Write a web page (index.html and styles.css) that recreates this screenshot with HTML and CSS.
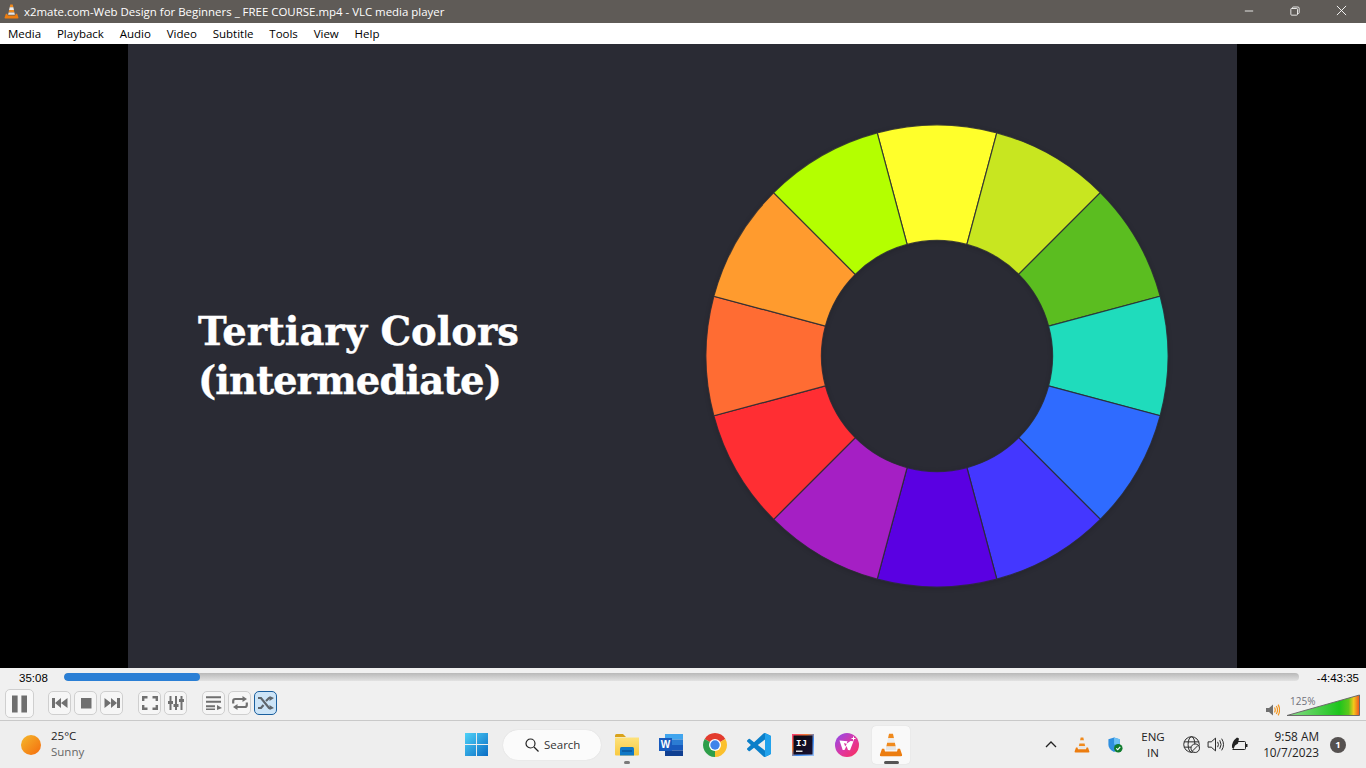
FILE: index.html
```html
<!DOCTYPE html>
<html lang="en">
<head>
<meta charset="utf-8">
<title>VLC media player</title>
<link rel="stylesheet" href="styles.css">
</head>
<body>
<div class="app">
  <header class="titlebar">
    <svg class="vlc-small" viewBox="0 0 16 16"><use href="#cone"/></svg>
    <span class="title-text">x2mate.com-Web Design for Beginners _ FREE COURSE.mp4 - VLC media player</span>
    <div class="winbtns">
      <svg class="wb wb-min" viewBox="0 0 12 12"><path d="M1 6h10" stroke="#fff" stroke-width="1"/></svg>
      <svg class="wb wb-max" viewBox="0 0 12 12"><path d="M3 3V2.200q0-1 1-1h5.500q1.500 0 1.500 1.500V8q0 1-1 1H9M1.500 3H8q1 0 1 1v6q0 1-1 1H2q-1 0-1-1V4q0-1 .5-1z" fill="none" stroke="#fff"/></svg>
      <svg class="wb wb-close" viewBox="0 0 12 12"><path d="M1 1l10 10M11 1L1 11" stroke="#fff"/></svg>
    </div>
  </header>
  <nav class="menubar">
    <span>Media</span><span>Playback</span><span>Audio</span><span>Video</span><span>Subtitle</span><span>Tools</span><span>View</span><span>Help</span>
  </nav>
  <main class="video">
    <section class="frame">
      <h1 class="slide-title">Tertiary Colors<br><span class="line2">(intermediate)</span></h1>
      <svg class="wheel" viewBox="-231 -231 462 462">
        <defs><path id="seg" d="M-59.790-223.130A231 231 0 0 1 59.790-223.130L29.900-111.600A115.500 115.500 0 0 0-29.900-111.600Z"/></defs>
        <g stroke="#2a2b34" stroke-opacity=".85" stroke-width="1.200">
          <use href="#seg" fill="#ffff2b"/>
          <use href="#seg" fill="#c8e620" transform="rotate(30)"/>
          <use href="#seg" fill="#5bbd20" transform="rotate(60)"/>
          <use href="#seg" fill="#1fdcbc" transform="rotate(90)"/>
          <use href="#seg" fill="#2f6bff" transform="rotate(120)"/>
          <use href="#seg" fill="#4437ff" transform="rotate(150)"/>
          <use href="#seg" fill="#5a00e2" transform="rotate(180)"/>
          <use href="#seg" fill="#a51fc4" transform="rotate(210)"/>
          <use href="#seg" fill="#ff2e33" transform="rotate(240)"/>
          <use href="#seg" fill="#ff6c33" transform="rotate(270)"/>
          <use href="#seg" fill="#ff9b2e" transform="rotate(300)"/>
          <use href="#seg" fill="#b4ff00" transform="rotate(330)"/>
        </g>
      </svg>
    </section>
  </main>
  <section class="controls">
    <div class="seekrow">
      <span class="time elapsed">35:08</span>
      <div class="track"><div class="fill"></div></div>
      <span class="time remaining">-4:43:35</span>
    </div>
    <div class="btnrow">
      <button class="btn big"><svg viewBox="0 0 16 18"><path d="M0 0h6v18H0zM10 0h6v18h-6z" fill="#6e6e6e"/></svg></button>
      <div class="group g1">
        <button class="btn"><svg viewBox="0 0 16 14"><path d="M0 2h3v10H0zM9 2v10L3 7zM15.500 2v10l-6.500-5z" fill="#707070"/></svg></button>
        <button class="btn"><svg viewBox="0 0 16 14"><path d="M3 2h10.500v10.500H3z" fill="#707070"/></svg></button>
        <button class="btn"><svg viewBox="0 0 16 14"><path d="M.5 2v10L7 7zM7 2v10l6-5zM13 2h3v10h-3z" fill="#707070"/></svg></button>
      </div>
      <div class="group g2">
        <button class="btn"><svg viewBox="0 0 16 14"><path d="M1.200 5V1.200h4.300M10.500 1.200h4.300V5M14.800 9v3.800h-4.300M5.500 12.800H1.200V9" fill="none" stroke="#707070" stroke-width="2.400"/></svg></button>
        <button class="btn"><svg viewBox="0 0 16 14"><path d="M2.500 0v14M8 0v14M13.500 0v14" stroke="#707070" stroke-width="2"/><path d="M0 5h5v3H0zM5.500 8h5v3h-5zM11 3h5v3h-5z" fill="#707070"/></svg></button>
      </div>
      <div class="group g3">
        <button class="btn"><svg viewBox="0 0 16 14"><path d="M0 1.200h15M0 5.700h15M0 10.200h9" stroke="#707070" stroke-width="2"/><path d="M11 9l5 3-5 2zM0 12.500h9V14H0z" fill="#707070"/></svg></button>
        <button class="btn"><svg viewBox="0 0 16 14"><path d="M1.200 7.500V5q0-2 2-2h9M14.800 6.500V9q0 2-2 2H4" fill="none" stroke="#707070" stroke-width="2.200"/><path d="M10.500 0l4.500 3-4.500 3zM5.500 8L1 11l4.500 3z" fill="#707070"/></svg></button>
        <button class="btn active"><svg viewBox="0 0 16 14"><path d="M0 2h3l8 10h1.500M0 12h3l2.500-3M8 5l3-3h1.500" fill="none" stroke="#5f666c" stroke-width="2.200"/><path d="M11.500 0l4.500 2-4.500 3zM11.500 9l4.500 3-4.500 2z" fill="#5f666c"/></svg></button>
      </div>
      <div class="volume">
        <svg class="spk" viewBox="0 0 14 12"><path d="M0 4h3l4-3.500v11L3 8H0z" fill="#707070"/><path d="M8.500 3.500q1.500 2.500 0 5M10.300 2q2.500 4 0 8M12.100.6q3 5.400 0 10.800" fill="none" stroke="#f5961e" stroke-width="1.200"/></svg>
        <div class="volbar">
          <span class="volpct">125%</span>
          <svg class="voltri" viewBox="0 0 74 22"><defs><linearGradient id="vg"><stop offset="0" stop-color="#8cdc8c"/><stop offset=".72" stop-color="#1dc51d"/><stop offset=".85" stop-color="#5dc81b"/><stop offset=".92" stop-color="#f5c81b"/><stop offset="1" stop-color="#f0501e"/></linearGradient></defs><path d="M1 21.500L73.500 1v20.500z" fill="url(#vg)" stroke="#6a6a6a"/></svg>
        </div>
      </div>
    </div>
  </section>
  <footer class="taskbar">
    <div class="weather">
      <span class="sun"></span>
      <div class="wtext"><div>25°C</div><div class="wsub">Sunny</div></div>
    </div>
    <div class="center">
      <svg class="ticon start" viewBox="0 0 24 24"><defs><linearGradient id="wg" x1="0" y1="0" x2="1" y2="1"><stop offset="0" stop-color="#4fd2f8"/><stop offset="1" stop-color="#0a6cc4"/></linearGradient></defs><path d="M0 0h11.500v11.500H0zM12.500 0H24v11.500H12.500zM0 12.500h11.500V24H0zM12.500 12.500H24V24H12.500z" fill="url(#wg)"/></svg>
      <div class="search"><svg class="mag" viewBox="0 0 14 14"><circle cx="5.500" cy="5.500" r="4.500" fill="none" stroke="#222" stroke-width="1.200"/><path d="M9 9l4.500 4.500" stroke="#222" stroke-width="1.300"/></svg><span>Search</span></div>
      <div class="tapp open-dot"><svg class="ticon" viewBox="0 0 24 24"><defs><linearGradient id="fg" x1="0" y1="0" x2="0" y2="1"><stop offset="0" stop-color="#fde27c"/><stop offset="1" stop-color="#f9c93f"/></linearGradient></defs><path d="M0 2.500q0-1.500 1.500-1.500h6.500l3 3h-11z" fill="#d9a21b"/><path d="M0 4.500h24v17q0 1-1 1H1q-1 0-1-1z" fill="url(#fg)"/><path d="M5 15.500q0-1.500 1.500-1.500h11q1.500 0 1.500 1.500v7H5z" fill="#0f78c6"/><path d="M7 17h10v2H7z" fill="#0a5ea6"/></svg></div>
      <div class="tapp"><svg class="ticon" viewBox="0 0 24 24"><path d="M6 1h18v5.500H6z" fill="#41a5ee"/><path d="M6 6.500h18v5.500H6z" fill="#2b7cd3"/><path d="M6 12h18v5.500H6z" fill="#185abd"/><path d="M6 17.500h18v5.500H6z" fill="#103f91"/><rect y="5" width="13" height="13" fill="#185abd"/><text x="6.500" y="15" class="wtxt">W</text></svg></div>
      <div class="tapp"><svg class="ticon" viewBox="0 0 24 24"><path d="M12 12L1.610 6A12 12 0 0 1 22.390 6Z" fill="#e33b2e"/><path d="M12 12L22.390 6A12 12 0 0 1 12 24Z" fill="#fbc02d"/><path d="M12 12L12 24A12 12 0 0 1 1.610 6Z" fill="#2e9e49"/><circle cx="12" cy="12" r="6" fill="#fff"/><circle cx="12" cy="12" r="4.700" fill="#3f84ea"/></svg></div>
      <div class="tapp"><svg class="ticon" viewBox="0 0 24 24"><path d="M23.150 2.587L18.210.21a1.494 1.494 0 0 0-1.705.29l-9.460 8.630-4.120-3.128a.999.999 0 0 0-1.276.057L.327 7.261A1 1 0 0 0 .326 8.740L3.899 12 .326 15.260a1 1 0 0 0 .001 1.479L1.650 17.940a.999.999 0 0 0 1.276.057l4.120-3.128 9.460 8.630a1.492 1.492 0 0 0 1.704.29l4.942-2.377A1.500 1.500 0 0 0 24 20.060V3.939a1.500 1.500 0 0 0-.85-1.352zm-5.146 14.861L10.826 12l7.178-5.448v10.896z" fill="#0b7fc9"/><path d="M18 .1L23.150 2.587A1.500 1.500 0 0 1 24 3.940V20.060a1.500 1.500 0 0 1-.85 1.352L18 23.900z" fill="#22a2ec"/></svg></div>
      <div class="tapp"><svg class="ticon ij" viewBox="0 0 24 24"><defs><linearGradient id="ig" x1="0" y1="0" x2="1" y2="1"><stop offset="0" stop-color="#fc3a76"/><stop offset=".35" stop-color="#f47a2e"/><stop offset=".6" stop-color="#3a8bf6"/><stop offset="1" stop-color="#9cc4f8"/></linearGradient><linearGradient id="ib" x1="0" y1="0" x2="1" y2="1"><stop offset="0" stop-color="#0a0a12"/><stop offset="1" stop-color="#1a1030"/></linearGradient></defs><rect x="1" y="1" width="22" height="22" fill="url(#ig)"/><rect x="2.500" y="2.500" width="19" height="19" fill="url(#ib)"/><text x="5" y="12.500" class="ijtxt">IJ</text><path d="M5 17.500h6.500V19H5z" fill="#ddd"/></svg></div>
      <div class="tapp"><svg class="ticon" viewBox="0 0 24 24"><defs><linearGradient id="wp" x1="0" y1="0" x2="1" y2="1"><stop offset="0" stop-color="#8a4cf0"/><stop offset=".55" stop-color="#e0369f"/><stop offset="1" stop-color="#fb2f55"/></linearGradient></defs><circle cx="12" cy="12" r="12" fill="url(#wp)"/><path d="M4.500 7.500l8 .8-1 2.500 4-2.800 3 .3-3.500 9-2-.2-1.500-4-2 4-1.800-.2z" fill="#fff"/><path d="M9 10l1.200 3.500 1.500-2.500z" fill="#d8369f"/><path d="M18.500 3.500v4M16.500 5.500h4" stroke="#fff" stroke-width="1"/></svg></div>
      <div class="tapp vlcbox"><svg class="ticon cone24" viewBox="0 0 16 16"><use href="#cone"/></svg></div>
    </div>
    <div class="tray">
      <div class="slot s30"><svg class="chev" viewBox="0 0 12 7"><path d="M1 6l5-5 5 5" fill="none" stroke="#222" stroke-width="1.300"/></svg></div>
      <div class="slot s32"><svg class="i16" viewBox="0 0 16 16"><use href="#cone"/></svg></div>
      <div class="slot s34"><svg class="i16 shield" viewBox="0 0 16 17"><path d="M7 .5l6 2v6q0 4-6 7.500-6-3.500-6-7.500v-6z" fill="#2f8fe0"/><path d="M7 .5l6 2V8H7z" fill="#6cc1f5"/><circle cx="11.500" cy="12" r="4.500" fill="#107c2e"/><path d="M9.300 12l1.600 1.500 2.700-3" fill="none" stroke="#fff" stroke-width="1.200"/></svg></div>
      <div class="slot s42 lang">ENG<br>IN</div>
      <div class="slot s34"><svg class="i17" viewBox="0 0 16 16"><g fill="none" stroke="#222" stroke-width=".9"><circle cx="8" cy="8" r="7.300"/><ellipse cx="8" cy="8" rx="3.200" ry="7.300"/><path d="M1 5.500h14M1 10.500h7"/></g><circle cx="11.500" cy="11.500" r="4" fill="#eee" stroke="#222" stroke-width=".9"/><path d="M9 14l5-5" stroke="#222" stroke-width=".9"/></svg></div>
      <div class="slot s14"><svg class="i17" viewBox="0 0 16 16"><g fill="none" stroke="#222" stroke-width=".9"><path d="M1 5.500h3l4-3.500v12l-4-3.500H1z"/><path d="M10 5.500q1.500 2.500 0 5M12 4q2.500 4 0 8M13.800 2.500q3.500 5.500 0 11"/></g></svg></div>
      <div class="slot s34"><svg class="i17" viewBox="0 0 17 16"><path d="M3 5h10.500q1 0 1 1v6q0 1-1 1H1.500" fill="none" stroke="#222"/><path d="M14.500 7.500h2v3h-2z" fill="#222"/><path d="M1 11q-.5-6 5-10l2 1-1 5-3 2-1.500 3.500z" fill="#222"/></svg></div>
      <div class="clock"><div>9:58 AM</div><div>10/7/2023</div></div>
      <span class="badge">1</span>
    </div>
  </footer>
</div>
<svg class="sprite" aria-hidden="true"><defs>
  <g id="cone"><path d="M6.700.5h2.600L10 3.500H6z" fill="#f08a1d"/><path d="M6 3.500h4l.6 3H5.400z" fill="#eee"/><path d="M5.400 6.500h5.200l.5 2.500H4.900z" fill="#f08a1d"/><path d="M4.900 9h6.200l.5 2.500H4.400z" fill="#e6e6e6"/><path d="M3.500 10.500L4 12.300h8l.5-1.800H14l1.400 4q.3 1-1 1H1.600q-1.300 0-1-1L2 10.500z" fill="#ec7d10"/></g>
</defs></svg>
</body>
</html>
```
FILE: styles.css
```css
* { box-sizing: border-box; }
html, body { margin: 0; padding: 0; height: 100%; overflow: hidden; }
body { font-family: "Open Sans", "Noto Sans", sans-serif; color: #000; }
.app { width: 1366px; height: 768px; display: flex; flex-direction: column; }
.sprite { width: 0; height: 0; position: absolute; }

.titlebar { height: 23px; background: #5f5b57; color: #fff; display: flex; align-items: center; font-size: 11.450px; padding-left: 4px; }
.vlc-small { width: 15px; height: 15px; margin-right: 5px; flex: none; }
.title-text { white-space: nowrap; }
.winbtns { margin-left: auto; display: flex; align-items: center; margin-bottom: 2px; }
.wb { width: 10px; height: 10px; flex: none; display: block; }
.wb-min { margin-right: 36px; }
.wb-max { margin-right: 36px; }
.wb-close { width: 11px; height: 11px; margin-right: 19px; }

.menubar { height: 21px; background: #fff; display: flex; align-items: center; font-size: 11.500px; padding: 0 0 1px 8px; gap: 15.800px; }

.video { height: 624px; background: #000; display: flex; padding-left: 128px; }
.frame { width: 1109px; background: #2a2b34; display: flex; align-items: center; justify-content: space-between; padding: 0 69px 0 70px; }
.slide-title { margin: 0; font-family: "DejaVu Serif", serif; font-weight: 700; font-size: 38.500px; line-height: 49px; color: #fff; -webkit-text-stroke: .4px #fff; }
.line2 { letter-spacing: -.9px; }
.wheel { width: 462px; height: 462px; flex: none; overflow: visible; filter: drop-shadow(0 1px 2px rgba(0,0,0,.15)); }

.controls { height: 52px; background: #f0f0f0; }
.seekrow { height: 19px; display: flex; align-items: center; font-family: "Liberation Sans", Arial, sans-serif; font-size: 11.500px; padding-top: 1px; }
.time { flex: none; }
.elapsed { width: 64px; padding-left: 19px; }
.remaining { width: 67px; text-align: right; padding-right: 7px; }
.track { width: 1235px; height: 8px; margin-bottom: 2px; border-radius: 4px; background: linear-gradient(#b8b8b8, #e2e2e2); overflow: hidden; }
.fill { width: 136px; height: 100%; border-radius: 4px; background: #2a7fd5; }

.btnrow { height: 33px; display: flex; align-items: flex-start; padding-left: 5px; padding-top: 2px; }
.btn { width: 23px; height: 24px; margin-top: 2px; padding: 0; border: 1px solid #cfcfcf; border-radius: 5px; background: #f6f6f6; display: flex; align-items: center; justify-content: center; flex: none; }
.btn svg { width: 16px; height: 14px; display: block; flex: none; }
.btn.big { width: 29px; height: 29px; margin-top: 0; background: #f8f8f8; }
.btn.big svg { width: 15px; height: 18px; }
.btn.active { background: #cce4f7; border-color: #1a5f9e; }
.group { display: flex; gap: 3px; }
.g1 { margin-left: 14px; }
.g2 { margin-left: 15px; }
.g3 { margin-left: 15px; }

.volume { margin-left: auto; display: flex; align-items: flex-end; height: 27px; padding-right: 6px; }
.spk { width: 14px; height: 12px; margin-right: 6px; }
.volbar { position: relative; width: 74px; height: 22px; }
.voltri { width: 74px; height: 22px; display: block; }
.volpct { position: absolute; left: 4px; top: 1px; font-size: 10px; line-height: 12px; color: #70707a; }

.taskbar { height: 48px; background: #eeeeee; border-top: 1px solid #c9c9c9; display: flex; align-items: center; font-size: 11.500px; color: #222; }
.weather { width: 464px; display: flex; align-items: center; padding-left: 21px; gap: 10px; flex: none; }
.sun { width: 20px; height: 20px; border-radius: 50%; background: linear-gradient(135deg, #f4b92c, #f56b0d); flex: none; }
.wtext { line-height: 16px; margin-top: -2px; }
.wsub { color: #666; }
.center { display: flex; align-items: center; }
.ticon { width: 24px; height: 24px; display: block; flex: none; }
.start { width: 23px; height: 23px; margin-left: 1px; }
.search { width: 98px; height: 30px; margin-left: 15px; margin-right: 14px; border-radius: 15px; background: #fbfbfb; box-shadow: 0 0 1px #ccc; display: flex; align-items: center; padding-left: 22px; gap: 5px; color: #333; }
.mag { width: 14px; height: 14px; flex: none; }
.tapp { position: relative; width: 24px; margin-right: 20px; flex: none; }
.open-dot::after { content: ""; position: absolute; left: 9px; top: 28px; width: 6px; height: 3px; border-radius: 2px; background: #7a7a7a; }
.vlcbox { width: 38px; height: 38px; margin-left: -7px; margin-right: 0; background: #f9f9f9; border-radius: 4px; box-shadow: 0 0 1px #ccc; display: flex; align-items: center; justify-content: center; }
.vlcbox::after { content: ""; position: absolute; left: 12px; top: 35px; width: 15px; height: 3px; border-radius: 2px; background: #555; }
.cone24 { width: 24px; height: 24px; }
.wtxt { font: 700 10px "Liberation Sans", sans-serif; fill: #fff; text-anchor: middle; }
.ijtxt { font: 700 9px "Liberation Mono", monospace; fill: #fff; }

.tray { margin-left: auto; display: flex; align-items: center; width: 330px; padding-right: 20px; flex: none; }
.slot { display: flex; align-items: center; justify-content: center; flex: none; }
.s30 { width: 30px; }
.s32 { width: 32px; }
.s34 { width: 34px; }
.s42 { width: 42px; }
.s14 { width: 14px; }
.lang { text-align: center; line-height: 16px; }
.chev { width: 12px; height: 7px; }
.i16 { width: 16px; height: 16px; flex: none; }
.i17 { width: 17px; height: 17px; flex: none; }
.clock { width: 63px; font-size: 11.800px; text-align: right; line-height: 16px; margin-right: 11px; margin-top: -2px; flex: none; }
.badge { width: 16px; height: 16px; border-radius: 50%; background: #555150; color: #fff; font-size: 9.500px; font-weight: 700; display: flex; align-items: center; justify-content: center; flex: none; }
```
